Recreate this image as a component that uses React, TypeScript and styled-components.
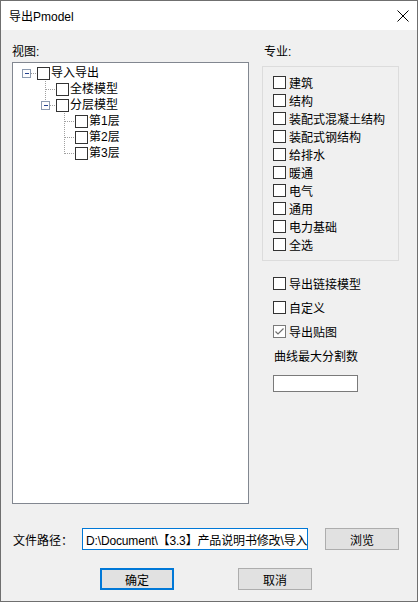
import React from "react";
import styled, { createGlobalStyle } from "styled-components";

const FONT = `"Liberation Sans", "Noto Sans CJK SC", sans-serif`;

const Global = createGlobalStyle`
  html, body { margin: 0; padding: 0; background: #ffffff; }
  * { box-sizing: border-box; }
`;

const Window = styled.div`
  width: 418px;
  height: 602px;
  border: 1px solid #6f6f6f;
  background: #f0f0f0;
  display: flex;
  flex-direction: column;
  font-family: ${FONT};
  font-size: 12px;
  color: #000;
`;

const TitleBar = styled.div`
  height: 29px;
  background: #ffffff;
  display: flex;
  align-items: center;
  justify-content: space-between;
  padding: 0 8px 0 8px;
  font-size: 12px;
`;

const Content = styled.div`
  flex: 1;
  display: flex;
  flex-direction: column;
  padding: 0 18px 0 11px;
`;

const TopArea = styled.div`
  display: grid;
  grid-template-columns: 237px 137px;
  column-gap: 13px;
`;

const Column = styled.div`
  display: flex;
  flex-direction: column;
`;

const SectionLabel = styled.div<{ $gap: number }>`
  margin-top: 14px;
  line-height: 16px;
  height: 16px;
  margin-bottom: ${(p) => p.$gap}px;
  padding-left: ${(p) => (p.$gap > 3 ? 2 : 0)}px;
`;

const TreeBox = styled.div`
  height: 442px;
  border: 1px solid #828790;
  background: #ffffff;
  padding: 2px 0 0 4px;
`;

const TreeRow = styled.div`
  height: 16px;
  display: flex;
  align-items: center;
`;

const TreeText = styled.span`
  margin-left: 1px;
  line-height: 16px;
  white-space: nowrap;
`;

const Box = styled.span<{ $checked?: boolean }>`
  width: 13px;
  height: 13px;
  flex: none;
  border: 1px solid ${(p) => (p.$checked ? "#7a7a7a" : "#333333")};
  background: #ffffff;
  display: inline-flex;
  align-items: center;
  justify-content: center;
`;

const GroupBox = styled.div`
  border: 1px solid #dcdcdc;
  padding: 6px 0 7px 10px;
  display: flex;
  flex-direction: column;
`;

const CheckRow = styled.label`
  height: 18px;
  display: flex;
  align-items: center;
  gap: 3px;
  white-space: nowrap;
`;

const Options = styled.div`
  margin-top: 13px;
  padding-left: 11px;
  display: flex;
  flex-direction: column;
  gap: 6px;
`;

const FieldCaption = styled.div`
  margin-top: 9px;
  padding-left: 12px;
  line-height: 16px;
`;

const SmallInput = styled.div`
  margin: 10px 0 0 11px;
  width: 85px;
  height: 17px;
  border: 1px solid #7a7a7a;
  background: #ffffff;
`;

const FileRow = styled.div`
  margin-top: 24px;
  height: 22px;
  display: flex;
  align-items: center;
  padding-left: 1px;
`;

const FileLabel = styled.span`
  width: 69px;
  white-space: nowrap;
`;

const PathField = styled.div`
  width: 226px;
  height: 22px;
  border: 1px solid #0078d7;
  background: #ffffff;
  padding: 0 2px 0 3px;
  display: flex;
  align-items: center;
  overflow: hidden;
  white-space: nowrap;
`;

const PathText = styled.span`
  letter-spacing: -0.15px;
`;

const Button = styled.button<{ $default?: boolean }>`
  width: 74px;
  height: 22px;
  padding: 0;
  font-family: ${FONT};
  font-size: 12px;
  color: #000;
  background: #e1e1e1;
  border: ${(p) => (p.$default ? "2px solid #0078d7" : "1px solid #adadad")};
  display: inline-flex;
  align-items: center;
  justify-content: center;
`;

const BrowseButton = styled(Button)`
  margin-left: 17px;
`;

const ButtonRow = styled.div`
  margin-top: 18px;
  padding-left: 88px;
  display: flex;
  gap: 64px;
`;

const CloseIcon = () => (
  <svg width="12" height="12" viewBox="0 0 12 12">
    <path d="M0.5 0.5 L11.5 11.5 M11.5 0.5 L0.5 11.5" stroke="#000" strokeWidth="1" />
  </svg>
);

const CheckMark = () => (
  <svg width="11" height="11" viewBox="0 0 11 11">
    <polyline points="1.5,5.5 4,8 9.5,2.5" fill="none" stroke="#6f6f6f" strokeWidth="1.2" />
  </svg>
);

const Check: React.FC<{ checked?: boolean }> = ({ checked }) => (
  <Box $checked={checked}>{checked ? <CheckMark /> : null}</Box>
);

type Node = { label: string; children?: Node[] };

const tree: Node = {
  label: "导入导出",
  children: [
    { label: "全楼模型" },
    {
      label: "分层模型",
      children: [{ label: "第1层" }, { label: "第2层" }, { label: "第3层" }],
    },
  ],
};

const COL = 19;
const LINE = "#a0a0a0";

const Connector: React.FC<{
  level: number;
  isLast: boolean;
  hasChildren: boolean;
  ancestors: boolean[];
}> = ({ level, isLast, hasChildren, ancestors }) => {
  const w = (level + 1) * COL + 1;
  const cx = level * COL + 9.5;
  const parts: React.ReactNode[] = [];
  ancestors.forEach((cont, i) => {
    if (i > 0 && cont) {
      const x = i * COL + 9.5;
      parts.push(<line key={"a" + i} x1={x} y1={0} x2={x} y2={16} />);
    }
  });
  if (level > 0) {
    parts.push(<line key="v" x1={cx} y1={0} x2={cx} y2={isLast ? 8.5 : 16} />);
  }
  parts.push(
    <line key="h" x1={hasChildren ? level * COL + 14 : cx} y1={8.5} x2={w} y2={8.5} />
  );
  return (
    <svg width={w} height={16} viewBox={`0 0 ${w} 16`} style={{ flex: "none" }} shapeRendering="crispEdges">
      <g stroke={LINE} strokeWidth="1" strokeDasharray="1 1">{parts}</g>
      {hasChildren ? (
        <g>
          <rect x={level * COL + 5.5} y={4.5} width={8} height={8} fill="#fdfdfd" stroke="#8d9bb0" />
          <line x1={level * COL + 7.5} y1={8.5} x2={level * COL + 12} y2={8.5} stroke="#24428f" />
        </g>
      ) : null}
    </svg>
  );
};

const renderTree = (
  node: Node,
  level: number,
  isLast: boolean,
  ancestors: boolean[],
  out: React.ReactNode[]
) => {
  const hasChildren = !!node.children && node.children.length > 0;
  out.push(
    <TreeRow key={node.label}>
      <Connector level={level} isLast={isLast} hasChildren={hasChildren} ancestors={ancestors} />
      <Check />
      <TreeText>{node.label}</TreeText>
    </TreeRow>
  );
  if (node.children) {
    node.children.forEach((c, i) =>
      renderTree(c, level + 1, i === node.children!.length - 1, [...ancestors, !isLast], out)
    );
  }
};

const disciplines = [
  "建筑",
  "结构",
  "装配式混凝土结构",
  "装配式钢结构",
  "给排水",
  "暖通",
  "电气",
  "通用",
  "电力基础",
  "全选",
];

const extras: { label: string; checked?: boolean }[] = [
  { label: "导出链接模型" },
  { label: "自定义" },
  { label: "导出贴图", checked: true },
];

export default function App() {
  const rows: React.ReactNode[] = [];
  renderTree(tree, 0, true, [], rows);

  return (
    <>
      <Global />
      <Window>
        <TitleBar>
          <span>导出Pmodel</span>
          <CloseIcon />
        </TitleBar>
        <Content>
          <TopArea>
            <Column>
              <SectionLabel $gap={2}>视图:</SectionLabel>
              <TreeBox>{rows}</TreeBox>
            </Column>
            <Column>
              <SectionLabel $gap={6}>专业:</SectionLabel>
              <GroupBox>
                {disciplines.map((d) => (
                  <CheckRow key={d}>
                    <Check />
                    <span>{d}</span>
                  </CheckRow>
                ))}
              </GroupBox>
              <Options>
                {extras.map((e) => (
                  <CheckRow key={e.label}>
                    <Check checked={e.checked} />
                    <span>{e.label}</span>
                  </CheckRow>
                ))}
              </Options>
              <FieldCaption>曲线最大分割数</FieldCaption>
              <SmallInput />
            </Column>
          </TopArea>
          <FileRow>
            <FileLabel>文件路径：</FileLabel>
            <PathField>
              <PathText>D:\Document\【3.3】产品说明书修改\导入</PathText>
            </PathField>
            <BrowseButton>浏览</BrowseButton>
          </FileRow>
          <ButtonRow>
            <Button $default>确定</Button>
            <Button>取消</Button>
          </ButtonRow>
        </Content>
      </Window>
    </>
  );
}
